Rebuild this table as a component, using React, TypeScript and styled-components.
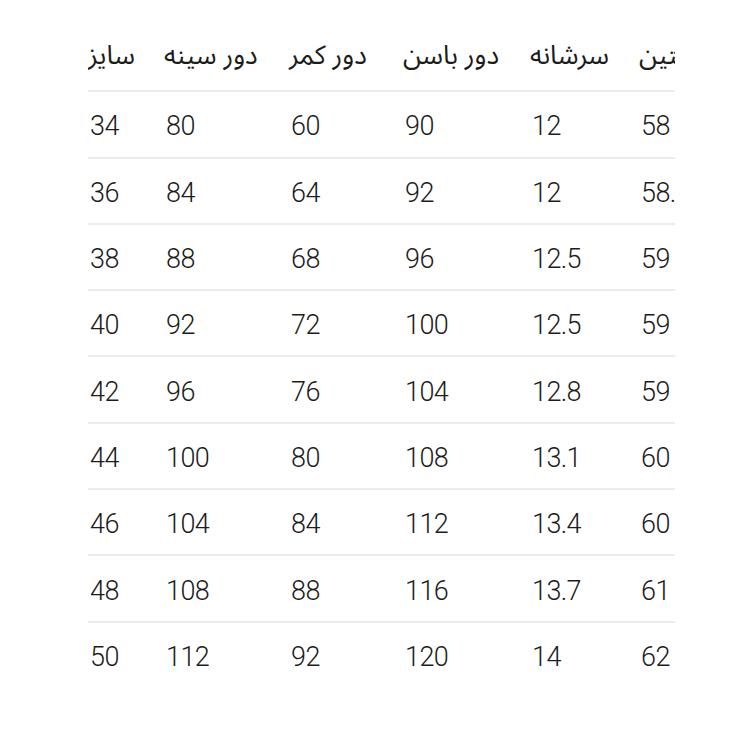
import React from "react";
import styled, { createGlobalStyle } from "styled-components";

const Global = createGlobalStyle`
  html, body { margin: 0; padding: 0; background: #ffffff; }
  body { font-family: "Roboto", "Noto Sans Arabic", "DejaVu Sans", sans-serif; }
`;

const Page = styled.div`
  width: 750px;
  height: 729px;
  box-sizing: border-box;
  padding: 25px 0 0 88px;
  background: #fff;
`;

const Scroller = styled.div`
  width: 587px;
  overflow: hidden;
`;

const Table = styled.table`
  border-collapse: collapse;
  table-layout: fixed;
  width: 686px;
  color: #1c1c1c;
`;

const Row = styled.tr<{ $last?: boolean }>`
  height: 66.3px;
  border-bottom: ${(p) => (p.$last ? "none" : "2px solid #ececec")};
`;

const Head = styled.th<{ $w: number }>`
  width: ${(p) => p.$w}px;
  padding: 0 0 4px 0;
  text-align: left;
  font-weight: 400;
  font-size: 26.5px;
  white-space: nowrap;
  font-family: "Noto Sans Arabic", "Vazirmatn", "DejaVu Sans", sans-serif;
`;

const Cell = styled.td`
  padding: 4px 0 0 2px;
  text-align: left;
  font-size: 27px;
  font-weight: 300;
  letter-spacing: -0.6px;
  white-space: nowrap;
  font-family: "Roboto", "Noto Sans", sans-serif;
`;

const cols = [
  { t: "سایز", w: 76 },
  { t: "دور سینه", w: 125 },
  { t: "دور کمر", w: 114 },
  { t: "دور باسن", w: 127 },
  { t: "سرشانه", w: 109 },
  { t: "آستین", w: 135 },
];

const rows = [
  ["34", "80", "60", "90", "12", "58"],
  ["36", "84", "64", "92", "12", "58.5"],
  ["38", "88", "68", "96", "12.5", "59"],
  ["40", "92", "72", "100", "12.5", "59"],
  ["42", "96", "76", "104", "12.8", "59"],
  ["44", "100", "80", "108", "13.1", "60"],
  ["46", "104", "84", "112", "13.4", "60"],
  ["48", "108", "88", "116", "13.7", "61"],
  ["50", "112", "92", "120", "14", "62"],
];

export default function App() {
  return (
    <Page>
      <Global />
      <Scroller>
        <Table>
          <thead>
            <Row>
              {cols.map((c) => (
                <Head key={c.t} $w={c.w}>
                  <span dir="rtl">{c.t}</span>
                </Head>
              ))}
            </Row>
          </thead>
          <tbody>
            {rows.map((r, i) => (
              <Row key={i} $last={i === rows.length - 1}>
                {r.map((v, j) => (
                  <Cell key={j}>{v}</Cell>
                ))}
              </Row>
            ))}
          </tbody>
        </Table>
      </Scroller>
    </Page>
  );
}
